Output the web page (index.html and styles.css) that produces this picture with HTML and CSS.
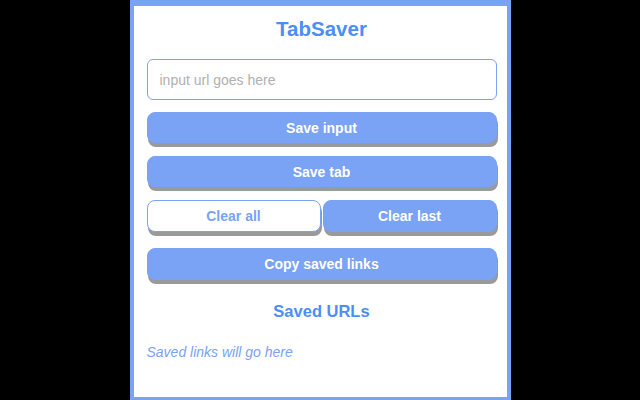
FILE: index.html
```html
<!DOCTYPE html>
<html lang="en">
<head>
    <meta charset="UTF-8">
    <meta name="viewport" content="width=device-width, initial-scale=1.0">
    <link rel="stylesheet" href="styles.css">
    <title>TabSaver</title>
</head>
<body>

<div id="popup">
    <h1>TabSaver</h1>

    <input type="text" id="url-input" placeholder="input url goes here">

    <button class="btn">Save input</button>
    <button class="btn">Save tab</button>

    <div class="btn-row">
        <button class="btn outline">Clear all</button>
        <button class="btn">Clear last</button>
    </div>

    <button class="btn copy">Copy saved links</button>

    <h2>Saved URLs</h2>

    <ul id="saved-list">
        <li class="empty">Saved links will go here</li>
    </ul>
</div>

</body>
</html>
```

FILE: styles.css
```css
body {
    margin: 0;
    background-color: #000;
    font-family: 'Liberation Sans', Arial, sans-serif;
}

#popup {
    box-sizing: border-box;
    width: 381px;
    height: 400px;
    margin: 0 auto;
    background-color: #fff;
    border: 4px solid #7aa2f5; /* light blue frame */
    border-top-width: 6px;
    border-bottom-width: 3px;
    padding: 11px 10px 0 13px;
}

h1 {
    margin: 0 0 18px;
    font-size: 20.5px;
    line-height: 24px;
    text-align: center;
    color: #4b8ef5;
}

#url-input {
    display: block;
    box-sizing: border-box;
    width: 100%;
    height: 41px;
    padding: 0 12px;
    border: 1.5px solid #7aa2f5;
    border-radius: 6px;
    font-family: inherit;
    font-size: 14px;
    outline: none;
}

#url-input::placeholder {
    color: #b0b0b0;
}

.btn {
    display: block;
    box-sizing: border-box;
    width: 100%;
    height: 31px;
    margin-top: 13px;
    border: 1.5px solid #7aa2f5;
    border-radius: 8px;
    background-color: #7aa2f5;
    color: #fff;
    font-family: inherit;
    font-size: 14px;
    font-weight: bold;
    box-shadow: 1px 4px 0 #9a9a9a;
    cursor: pointer;
}

#url-input + .btn {
    margin-top: 12px;
}

.btn-row {
    display: flex;
    gap: 2px;
    margin-top: 13px;
}

.btn-row .btn {
    flex: 1;
    height: 32px;
    margin-top: 0;
}

.btn.outline {
    background-color: #fff;
    color: #7aa2f5;
}

.btn.copy {
    margin-top: 16px;
    height: 32px;
}

h2 {
    margin: 21px 0 0;
    font-size: 16.5px;
    line-height: 20px;
    text-align: center;
    color: #4b8ef5;
}

#saved-list {
    list-style: none;
    margin: 22px 0 0;
    padding: 0;
}

#saved-list .empty {
    font-size: 14px;
    line-height: 18px;
    font-style: italic;
    color: #7aa2f5;
}
```
